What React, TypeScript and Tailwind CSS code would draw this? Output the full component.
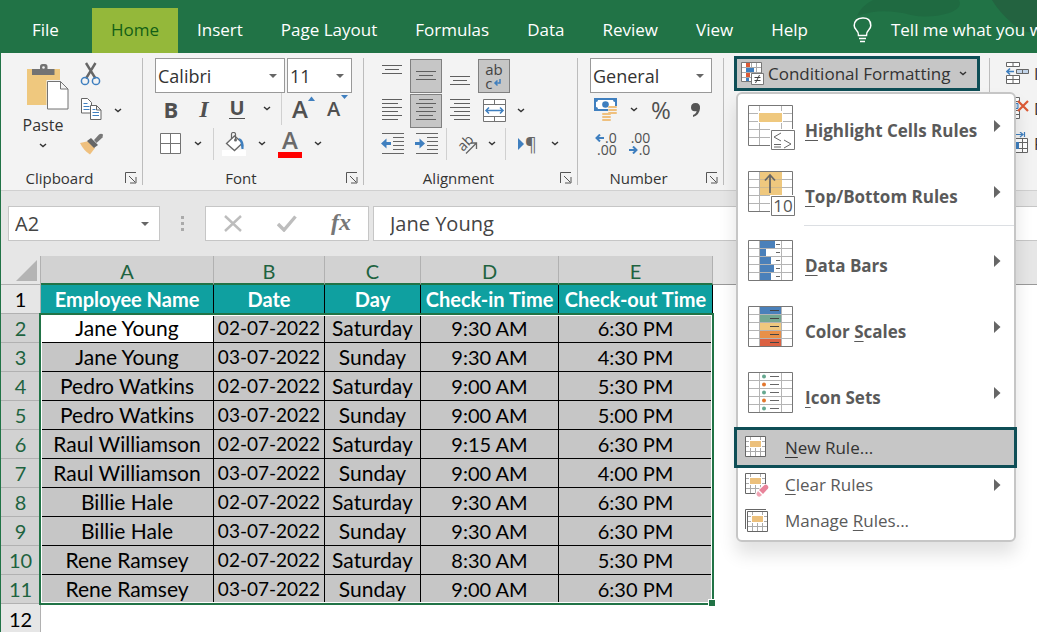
import React from 'react';
import clsx from 'clsx';

type Children = { children?: React.ReactNode };

const tabs = ['File', 'Home', 'Insert', 'Page Layout', 'Formulas', 'Data', 'Review', 'View', 'Help'];

const columns = ['A', 'B', 'C', 'D', 'E'];
const headings = ['Employee Name', 'Date', 'Day', 'Check-in Time', 'Check-out Time'];
const cellText = ['text-[21px]', 'text-[19px]', 'text-[21px]', 'text-xl', 'text-xl'];
const records = [
  ['Jane Young', '02-07-2022', 'Saturday', '9:30 AM', '6:30 PM'],
  ['Jane Young', '03-07-2022', 'Sunday', '9:30 AM', '4:30 PM'],
  ['Pedro Watkins', '02-07-2022', 'Saturday', '9:00 AM', '5:30 PM'],
  ['Pedro Watkins', '03-07-2022', 'Sunday', '9:00 AM', '5:00 PM'],
  ['Raul Williamson', '02-07-2022', 'Saturday', '9:15 AM', '6:30 PM'],
  ['Raul Williamson', '03-07-2022', 'Sunday', '9:00 AM', '4:00 PM'],
  ['Billie Hale', '02-07-2022', 'Saturday', '9:30 AM', '6:30 PM'],
  ['Billie Hale', '03-07-2022', 'Sunday', '9:30 AM', '6:30 PM'],
  ['Rene Ramsey', '02-07-2022', 'Saturday', '8:30 AM', '5:30 PM'],
  ['Rene Ramsey', '03-07-2022', 'Sunday', '9:00 AM', '6:30 PM'],
];

/* ---------- small drawing helpers ---------- */

const Icon = ({ w, h, children }: { w: number; h: number } & Children) => (
  <svg width={w} height={h} viewBox={`0 0 ${w} ${h}`} fill="none" className="shrink-0" aria-hidden="true">
    {children}
  </svg>
);

const Chevron = () => (
  <Icon w={8} h={5}>
    <path d="M1 1l3 2.6L7 1" stroke="#333" strokeWidth="1.4" />
  </Icon>
);

const DropButton = ({ label, className }: { label: string; className?: string }) => (
  <button type="button" aria-label={label} className={clsx('flex h-8 items-center justify-center', className)}>
    <Chevron />
  </button>
);

const Triangle = () => (
  <Icon w={8} h={4}>
    <path d="M0 0h8L4 4z" fill="#666" />
  </Icon>
);

const Divider = () => <div className="h-8 w-px shrink-0 bg-[#d0d0d0]" />;

// Horizontal strokes given as [x1, x2, y]
const Lines = ({ w, h, rows }: { w: number; h: number; rows: number[][] }) => (
  <Icon w={w} h={h}>
    <path d={rows.map(([a, b, y]) => `M${a} ${y + 0.5}H${b}`).join('')} stroke="#5f5f5f" />
  </Icon>
);

/* ---------- ribbon ---------- */

const Group = ({ title, className, children }: { title: string; className: string } & Children) => (
  <section aria-label={title} className={clsx('flex shrink-0', className)}>
    <div className="flex min-w-0 flex-1 flex-col">
      <div className="h-[108px]">{children}</div>
      <div className="flex h-6 items-center">
        <span className="flex-1 text-center text-[15px] leading-6 text-[#333]">{title}</span>
        <button type="button" aria-label={`${title} settings`} className="flex w-6 justify-center pl-0.5">
          <Icon w={12} h={12}>
            <path d="M.5 11V.5H11M4 4l6 6M11 5v6H5" stroke="#555" />
          </Icon>
        </button>
      </div>
    </div>
    <div className="h-[127px] w-px bg-[#bcbcbc]" />
  </section>
);

const Row = ({ className, children }: { className?: string } & Children) => (
  <div className={clsx('flex h-[35px] items-center', className)}>{children}</div>
);

const Cell = ({ label, pressed, children }: { label: string; pressed?: boolean } & Children) => (
  <div className="flex w-[34px] justify-center">
    <button
      type="button"
      aria-label={label}
      className={clsx(
        'flex h-[34px] w-8 items-center justify-center border',
        pressed ? 'border-[#808080] bg-[#c6c6c6]' : 'border-transparent',
      )}
    >
      {children}
    </button>
  </div>
);

const Combo = ({ label, value, className }: { label: string; value: string; className: string }) => (
  <div className={clsx('grid h-[35px] items-center border border-[#999] bg-white', className)}>
    <select
      aria-label={label}
      defaultValue={value}
      className="col-start-1 row-start-1 w-full appearance-none bg-transparent pl-0.5 text-lg leading-8 text-[#333]"
    >
      <option>{value}</option>
    </select>
    <span className="pointer-events-none col-start-1 row-start-1 mr-[7px] justify-self-end">
      <Triangle />
    </span>
  </div>
);

const Clipboard = () => (
  <Group title="Clipboard" className="w-[142px]">
    <div className="flex">
      <button type="button" className="flex w-[79px] flex-col items-center pt-1.5 pl-[5px] text-base leading-5 text-[#333]">
        <span className="ml-2.5">
          <Icon w={42} h={46}>
            <path d="M0 5h33v36H0z" fill="#efc87e" />
            <path d="M5 5h8V2.500q0-2.500 2.500-2.500h2.500q2.500 0 2.500 2.500V5h7v6H5z" fill="#737373" />
            <circle cx="16.500" cy="3.500" r="1.300" fill="#f3f3f3" />
            <path d="M19.500 16h15l8 8v22h-23z" fill="#f3f3f3" />
            <path d="M20.500 17.500h13l7.500 7.500v20h-20.500zM33.500 17.500V25H41" fill="#fff" stroke="#737373" />
          </Icon>
        </span>
        <span className="pt-[5px]">Paste</span>
        <span className="pt-2">
          <Chevron />
        </span>
      </button>
      <div className="flex flex-col">
        <Row>
          <button type="button" aria-label="Cut" className="pb-1">
            <Icon w={22} h={24}>
              <path d="M6 1l9.500 15.500M15.500 1L6 16.500" stroke="#666" strokeWidth="2.400" />
              <circle cx="5" cy="19" r="3.600" stroke="#3f7fbf" strokeWidth="1.500" />
              <circle cx="16" cy="19" r="3.600" stroke="#3f7fbf" strokeWidth="1.500" />
            </Icon>
          </button>
        </Row>
        <Row>
          <button type="button" aria-label="Copy" className="pb-1">
            <Icon w={22} h={24}>
              <path d="M1.500 1.500h6l4 4V16h-10z" fill="#fff" stroke="#666" />
              <path d="M3.500 6.500h4M3.500 9.500h6M3.500 12.500h6" stroke="#3f7fbf" />
              <path d="M10.500 8.500h6l4.500 4.500v9.500H10.500zM16.500 8.500V13H21" fill="#fff" stroke="#666" />
              <path d="M12.500 12.500h3M12.500 15.500h6.500M12.500 18.500h6.500" stroke="#3f7fbf" />
            </Icon>
          </button>
          <DropButton label="Copy options" className="ml-2 w-4" />
        </Row>
        <Row>
          <button type="button" aria-label="Format Painter" className="pb-1">
            <Icon w={24} h={22}>
              <path d="M0 10l9-2 6 7-5 6.500Q4 18 0 10z" fill="#efc07e" />
              <path d="M11 5l7 7-4 3-7-7z" fill="#666" />
              <path d="M14 7l5-5.500q2-1.500 4 0l-.5 3L16.500 10z" fill="#777" />
            </Icon>
          </button>
        </Row>
      </div>
    </div>
  </Group>
);

const FontGroup = () => (
  <Group title="Font" className="w-[221px]">
    <Row className="gap-0.5 pl-3">
      <Combo label="Font name" value="Calibri" className="w-[130px]" />
      <Combo label="Font size" value="11" className="w-[65px]" />
    </Row>
    <Row className="pb-1 pl-3 text-[22px] leading-8 text-[#505050]">
      <button type="button" aria-label="Bold" className="w-8 font-bold">B</button>
      <button type="button" aria-label="Italic" className="w-[34px] font-['Liberation_Serif',serif] text-2xl font-bold italic">I</button>
      <button type="button" aria-label="Underline" className="flex w-8 justify-center">
        <span className="border-b border-[#505050] text-xl leading-5 font-bold">U</span>
      </button>
      <DropButton label="Underline options" className="w-7" />
      <Divider />
      <button type="button" aria-label="Increase font size" className="ml-2.5 flex text-2xl font-semibold">
        A
        <Icon w={7} h={12}>
          <path d="M0 8L3.500 3.500 7 8z" fill="#3f7fbf" />
        </Icon>
      </button>
      <button type="button" aria-label="Decrease font size" className="ml-3 flex text-xl leading-9 font-semibold">
        A
        <Icon w={8} h={12}>
          <path d="M1 4h7L4.500 8z" fill="#3f7fbf" />
        </Icon>
      </button>
    </Row>
    <Row className="pb-1 pl-[17px]">
      <button type="button" aria-label="Borders">
        <Icon w={22} h={22}>
          <path d="M.5.5h20v20H.5zM10.500 0v21M0 10.500h21" fill="#fff" stroke="#737373" />
        </Icon>
      </button>
      <DropButton label="Border options" className="w-[31px]" />
      <Divider />
      <button type="button" aria-label="Fill color" className="ml-2">
        <Icon w={24} h={24}>
          <path d="M0 18h24v6H0z" fill="#fff" />
          <path d="M4.500 11.500L12.500 4l8 7-8 7.500z" fill="#fff" stroke="#666" strokeWidth="1.300" />
          <path d="M9.500 7V2q0-1.500 2-1.500t2 1.500v5" stroke="#666" strokeWidth="1.200" />
          <circle cx="13.500" cy="8" r="1.500" fill="#666" />
          <path d="M16.500 6q6 1 5 11h-2q0-6-3-11z" fill="#3f7fbf" />
        </Icon>
      </button>
      <DropButton label="Fill color options" className="w-8" />
      <button type="button" aria-label="Font color" className="flex h-7 w-6 flex-col items-center border-b-[6px] border-[#f00]">
        <span className="text-2xl leading-5 font-semibold text-[#6a6a6a]">A</span>
      </button>
      <DropButton label="Font color options" className="w-8" />
    </Row>
  </Group>
);

const Alignment = () => (
  <Group title="Alignment" className="w-[214px]">
    <Row className="pl-[11px]">
      <Cell label="Top align">
        <Lines w={20} h={22} rows={[[0, 20, 0], [3, 17, 4], [0, 20, 8]]} />
      </Cell>
      <Cell label="Middle align" pressed>
        <Lines w={20} h={22} rows={[[0, 20, 6], [3, 17, 10], [0, 20, 14]]} />
      </Cell>
      <Cell label="Bottom align">
        <Lines w={20} h={22} rows={[[0, 20, 11], [3, 17, 15], [0, 20, 19]]} />
      </Cell>
      <Cell label="Wrap text" pressed>
        <span className="flex flex-col text-[15px] leading-[14px] text-[#444]">
          <span>ab</span>
          <span className="flex items-center gap-px">
            c
            <Icon w={8} h={8}>
              <path d="M7 0v4H2M4.500 1.500L2 4l2.500 2.500" stroke="#3f7fbf" strokeWidth="1.500" />
            </Icon>
          </span>
        </span>
      </Cell>
    </Row>
    <Row className="pl-[11px]">
      <Cell label="Align left">
        <Lines w={20} h={23} rows={[[0, 20, 0], [0, 16, 4], [0, 20, 8], [0, 16, 12], [0, 20, 16], [0, 16, 20]]} />
      </Cell>
      <Cell label="Center" pressed>
        <Lines w={20} h={23} rows={[[3, 17, 0], [0, 20, 4], [3, 17, 8], [0, 20, 12], [3, 17, 16], [0, 20, 20]]} />
      </Cell>
      <Cell label="Align right">
        <Lines w={20} h={23} rows={[[0, 20, 0], [4, 20, 4], [0, 20, 8], [4, 20, 12], [0, 20, 16], [4, 20, 20]]} />
      </Cell>
      <Cell label="Merge and center">
        <Icon w={23} h={23}>
          <path d="M.5.5h22v22H.5zM.5 5.500h22M.5 17.500h22M11.500 0v5M11.500 18v5" fill="#fff" stroke="#737373" />
          <path d="M3 11.500h17M6 8.500l-3 3 3 3M17 8.500l3 3-3 3" stroke="#3f7fbf" strokeWidth="1.500" />
        </Icon>
      </Cell>
      <DropButton label="Merge options" className="w-5" />
    </Row>
    <Row className="pb-1 pl-[11px]">
      <Cell label="Decrease indent">
        <Icon w={23} h={21}>
          <path d="M1 .5h22M12 4.500h11M12 8.500h11M12 12.500h11M12 16.500h11M1 20.500h22" stroke="#666" />
          <path d="M0 10.500l5.500-5V9H10v3H5.500v3.500z" fill="#3f7fbf" />
        </Icon>
      </Cell>
      <Cell label="Increase indent">
        <Icon w={23} h={21}>
          <path d="M1 .5h22M12 4.500h11M12 8.500h11M12 12.500h11M12 16.500h11M1 20.500h22" stroke="#666" />
          <path d="M10 10.500l-5.500-5V9H0v3h4.500v3.500z" fill="#3f7fbf" />
        </Icon>
      </Cell>
      <span className="w-[3px]" />
      <Divider />
      <button type="button" aria-label="Orientation" className="ml-2">
        <Icon w={24} h={24}>
          <text x="8" y="20" transform="rotate(-45 8 20)" fontSize="14" fill="#555">ab</text>
          <path d="M11 21.500l10-10M15.500 11h6v6" stroke="#666" strokeWidth="1.300" />
        </Icon>
      </button>
      <DropButton label="Orientation options" className="w-[26px]" />
      <Divider />
      <button type="button" aria-label="Text direction" className="ml-3 flex items-center text-lg leading-8 text-[#666]">
        <Icon w={7} h={12}>
          <path d="M0 0l6 6-6 6z" fill="#3f7fbf" />
        </Icon>
        ¶
      </button>
      <DropButton label="Text direction options" className="w-9" />
    </Row>
  </Group>
);

const NumberGroup = () => (
  <Group title="Number" className="w-[146px]">
    <Row className="pl-3">
      <Combo label="Number format" value="General" className="w-[122px]" />
    </Row>
    <Row className="pb-0.5 pl-4">
      <button type="button" aria-label="Accounting format">
        <Icon w={24} h={23}>
          <path d="M0 0h23v13H0z" fill="#3f7fbf" />
          <path d="M2 4q2 0 2-2h15q0 2 2 2v5q-2 0-2 2H4q0-2-2-2z" fill="#fff" />
          <circle cx="11.500" cy="6.500" r="3.300" fill="#3f7fbf" />
          <path d="M14 8h9v9h-5v5H8v-7h6z" fill="#f3f3f3" />
          <g fill="#efc07e">
            <rect x="14" y="8" width="9" height="2" rx="1" />
            <rect x="14" y="11" width="9" height="2" rx="1" />
            <rect x="14" y="14" width="9" height="2" rx="1" />
            <rect x="8" y="15" width="9" height="2" rx="1" />
            <rect x="8" y="18" width="9" height="2" rx="1" />
            <rect x="8" y="21" width="9" height="2" rx="1" />
          </g>
        </Icon>
      </button>
      <DropButton label="Accounting options" className="w-[31px]" />
      <button type="button" aria-label="Percent style" className="w-6 text-2xl leading-8 text-[#505050]">%</button>
      <button type="button" aria-label="Comma style" className="ml-[18px]">
        <Icon w={10} h={14}>
          <path d="M4.500 0q5 0 4.500 5.500Q8.500 12 2 14v-2q3.500-1.500 3.500-4Q0 9 0 4.500 0 0 4.500 0z" fill="#555" />
        </Icon>
      </button>
    </Row>
    <Row className="gap-3 pb-1 pl-[17px] text-sm leading-3 text-[#505050]">
      <button type="button" aria-label="Increase decimal" className="flex flex-col items-end">
        <span className="flex items-center">
          <Icon w={10} h={8}>
            <path d="M9 4H2M5 .5L1.500 4 5 7.500" stroke="#3f7fbf" strokeWidth="2" />
          </Icon>
          .0
        </span>
        <span>.00</span>
      </button>
      <button type="button" aria-label="Decrease decimal" className="flex flex-col items-end">
        <span>.00</span>
        <span className="flex items-center">
          <Icon w={10} h={8}>
            <path d="M0 4h7M4 .5L7.500 4 4 7.500" stroke="#3f7fbf" strokeWidth="2" />
          </Icon>
          .0
        </span>
      </button>
    </Row>
  </Group>
);

/* ---------- conditional formatting menu ---------- */

const bigGrid = 'M0 8.500h45M0 16.500h45M0 24.500h45M0 32.500h45M11.500 0v41M33.500 0v41';

const BigIcon = ({ children }: Children) => (
  <Icon w={48} h={46}>
    <path d="M.5.5h44v40H.5z" fill="#fff" />
    <path d={bigGrid} stroke="#b4b4b4" />
    <path d="M.5.5h44v40H.5z" stroke="#777" />
    {children}
  </Icon>
);

const HighlightIcon = () => (
  <BigIcon>
    <path d="M10 6h25v12H10z" fill="#fff" />
    <path d="M11 8h23v9H11z" fill="#efc87e" />
    <path d="M22 24h26v22H22z" fill="#fff" />
    <path d="M23.500 25.500h23v19h-23z" fill="#fff" stroke="#777" />
    <path d="M33 28l-7 4 7 4M26 39.500h7M26 42h7M36 35l7 4-7 4" stroke="#666" />
  </BigIcon>
);

const TopBottomIcon = () => (
  <BigIcon>
    <path d="M12 1h22v23H12z" fill="#efc87e" />
    <path d="M12 8.500h22M12 16.500h22" stroke="#d0b98c" />
    <path d="M22 22V4M17 9.500L22 4l5 5.500" stroke="#666" strokeWidth="1.800" />
    <path d="M22 24h26v22H22z" fill="#fff" />
    <path d="M23.500 25.500h23v19h-23z" fill="#fff" stroke="#777" />
    <text x="35" y="41" textAnchor="middle" fontSize="17" fill="#555">10</text>
  </BigIcon>
);

const DataBarsIcon = () => (
  <BigIcon>
    <path d="M12 1h21v39H12z" fill="#fff" />
    <path d="M12 8.500h21M12 16.500h21M12 24.500h21M12 32.500h21" stroke="#b4b4b4" />
    {[15, 6, 11, 14, 11].map((w, i) => (
      <g key={i}>
        <path d={`M12 ${i * 8 + 1}h${w}v7h-${w}z`} fill="#4a80ba" />
        <path d={`M28 ${i * 8 + 4.5}h4`} stroke="#666" />
      </g>
    ))}
  </BigIcon>
);

const ColorScalesIcon = () => (
  <BigIcon>
    {['#4a80ba', '#74a892', '#efc87e', '#e89048', '#db6142'].map((fill, i) => (
      <g key={fill}>
        <path d={`M12 ${i * 8 + 1}h21v7H12z`} fill={fill} />
        <path d={`M22 ${i * 8 + 4.5}h9`} stroke="#444" />
      </g>
    ))}
  </BigIcon>
);

const IconSetsIcon = () => (
  <BigIcon>
    {['#65a88f', '#e3762c', '#65a88f', '#e3762c', '#65a88f'].map((fill, i) => (
      <g key={i}>
        <circle cx="16" cy={i * 8 + 4.5} r="2" fill={fill} />
        <path d={`M22 ${i * 8 + 4.5}h9`} stroke="#666" />
      </g>
    ))}
  </BigIcon>
);

const RuleSheet = () => (
  <>
    <path d="M.5.5h20v20H.5z" fill="#fff" />
    <path d="M0 5.500h21M0 10.500h21M0 15.500h21M5.500 0v21M10.500 11v10M15.500 0v21" stroke="#aaa" />
    <path d="M4 4h13v8H4z" fill="#fff" />
    <path d="M5 5h11v6H5z" fill="#ecc07c" />
    <path d="M.5.5h20v20H.5z" stroke="#666" />
  </>
);

const NewRuleIcon = () => (
  <Icon w={24} h={24}>
    <RuleSheet />
  </Icon>
);

const ClearRulesIcon = () => (
  <Icon w={24} h={24}>
    <RuleSheet />
    <path d="M9 22l9-11h6v13H9z" fill="#fff" />
    <path d="M14 17l5.500-5q1.500-1 3 .5t.5 3L18 21z" fill="#e8839a" />
    <path d="M13 18l4 4-2 1.500q-1.500.5-2.500-.5t-1-2.500z" fill="#f0a3b3" />
  </Icon>
);

const ManageRulesIcon = () => (
  <Icon w={24} h={24}>
    <path d="M.5 20V.5H21" stroke="#666" />
    <g transform="translate(2 2)">
      <RuleSheet />
    </g>
  </Icon>
);

const Arrow = () => (
  <Icon w={7} h={12}>
    <path d="M0 0l6.500 6L0 12z" fill="#666" />
  </Icon>
);

const U = ({ children }: Children) => (
  <span className="underline decoration-1 underline-offset-3">{children}</span>
);

const BigItem = ({ icon, children }: { icon: React.ReactNode } & Children) => (
  <button type="button" role="menuitem" className="flex h-[66px] w-full gap-[9px] pt-[11px] pr-[13px] pl-2.5 text-left">
    {icon}
    <span className="flex-1 pt-3.5 text-[17px] leading-6 font-bold whitespace-nowrap text-[#5a5a5a]">{children}</span>
    <span className="pt-[15px]">
      <Arrow />
    </span>
  </button>
);

const smallItem = 'flex items-center gap-4 pr-[13px] text-left text-[17px] leading-6';

const FormattingMenu = () => (
  <div
    role="menu"
    aria-label="Conditional Formatting"
    className="absolute top-full left-0.5 z-20 mt-px w-[280px] rounded-md border-2 border-[#c6c6c6] bg-white shadow-[0_12px_18px_rgba(0,0,0,0.12)]"
  >
    <BigItem icon={<HighlightIcon />}><U>H</U>ighlight Cells Rules</BigItem>
    <BigItem icon={<TopBottomIcon />}><U>T</U>op/Bottom Rules</BigItem>
    <div className="-mt-px mb-[3px] ml-[66px] h-px bg-[#dcdfe3]" />
    <BigItem icon={<DataBarsIcon />}><U>D</U>ata Bars</BigItem>
    <BigItem icon={<ColorScalesIcon />}>Color <U>S</U>cales</BigItem>
    <BigItem icon={<IconSetsIcon />}><U>I</U>con Sets</BigItem>
    <div className="-mr-[3px] -ml-1">
      <button
        type="button"
        role="menuitem"
        className={clsx(smallItem, 'h-[41px] w-full border-[3px] border-[#0e4e56] bg-[#c6c6c6] pl-2 text-[#333]')}
      >
        <NewRuleIcon />
        <span><U>N</U>ew Rule...</span>
      </button>
    </div>
    <button type="button" role="menuitem" className={clsx(smallItem, 'h-[34px] w-full pl-[7px] text-[#5a5a5a]')}>
      <ClearRulesIcon />
      <span className="flex-1"><U>C</U>lear Rules</span>
      <Arrow />
    </button>
    <button type="button" role="menuitem" className={clsx(smallItem, 'h-[38px] w-full pl-[7px] text-[#5a5a5a]')}>
      <ManageRulesIcon />
      <span>Manage <U>R</U>ules...</span>
    </button>
  </div>
);

const Styles = () => (
  <section aria-label="Styles" className="flex shrink-0">
    <div className="-mt-0.5 w-[265px] pl-2.5">
      <div className="relative w-[246px]">
        <button
          type="button"
          aria-haspopup="menu"
          aria-expanded="true"
          className="flex h-[35px] w-full items-center gap-1 border-[3px] border-[#0e4e56] bg-[#c6c6c6] pl-1 text-[17px] leading-6 whitespace-nowrap text-[#333]"
        >
          <Icon w={23} h={23}>
            <path d="M.5.5h20v19H.5z" fill="#fff" />
            <path d="M0 5.500h21M0 10.500h21M0 15.500h21M5.500 0v20M10.500 0v20M15.500 0v20" stroke="#aaa" />
            <path d="M5 1h4v4H5zM5 11h4v4H5z" fill="#dc5a36" />
            <path d="M5 6h8v4H5zM5 16h3v3H5z" fill="#3f7fbf" />
            <path d="M.5.5h20v19H.5z" stroke="#777" />
            <path d="M10.500 11.500h12v11h-12z" fill="#fff" stroke="#777" />
            <path d="M13.500 15.500h6M13.500 18.500h6M18.500 13l-4 8" stroke="#444" />
          </Icon>
          <span className="flex-1 text-left">Conditional Formatting</span>
          <span className="pr-2.5">
            <Chevron />
          </span>
        </button>
        <FormattingMenu />
      </div>
    </div>
    <div className="h-[127px] w-px bg-[#bcbcbc]" />
  </section>
);

const Cells = () => (
  <section aria-label="Cells" className="flex min-w-0 flex-1 flex-col overflow-hidden pl-4 text-base leading-8 text-[#333]">
    <Row className="gap-[5px] pb-1">
      <Icon w={23} h={23}>
        <path d="M.5.5h13v4H.5zM7 .5v4M.5 13.500h13v8H.5zM7 13.500v8M.5 17.500h13" fill="#fff" stroke="#666" />
        <path d="M10.500 7.500h12v4h-12zM16.500 7.500v4" fill="#c3d5ea" stroke="#666" />
        <path d="M8 9.500H1M4 6.500l-3 3 3 3" stroke="#3f7fbf" strokeWidth="1.600" />
      </Icon>
      <button type="button">Insert</button>
    </Row>
    <Row className="gap-[5px] pb-1">
      <Icon w={23} h={23}>
        <path d="M.5.5h13v4H.5zM7 .5v4M.5 13.500h13v8H.5zM7 13.500v8M.5 17.500h13" fill="#fff" stroke="#666" />
        <path d="M0 6.500h12v5H0z" fill="#c3d5ea" stroke="#3f7fbf" />
        <path d="M12 4l10 10M22 4L12 14" stroke="#dc5a36" strokeWidth="2.200" />
      </Icon>
      <button type="button">Delete</button>
    </Row>
    <Row className="gap-[5px] pb-1">
      <Icon w={23} h={24}>
        <path d="M7 2.500h10M14 0l3 2.500L14 5M18.500 0v5" stroke="#3f7fbf" strokeWidth="1.200" />
        <path d="M.5 6.500h21v14H.5zM.5 10.500h21M.5 16.500h21M16.500 7v13" fill="#fff" stroke="#666" />
        <path d="M5 10h8v7H5z" fill="#3f7fbf" />
      </Icon>
      <button type="button">Format</button>
    </Row>
  </section>
);

/* ---------- title tabs, formula bar, sheet ---------- */

const TabBar = () => (
  <header className="relative flex h-[53px] shrink-0 items-end overflow-hidden bg-[#217346] text-[17px] leading-6 whitespace-nowrap text-white">
    <svg width="190" height="34" viewBox="0 0 190 34" className="absolute top-0 right-0" aria-hidden="true">
      <path d="M10 16Q14 6 26 0h86q4 8-10 13-20 6-38 2-30-8-54 1z" fill="#1f6a41" />
      <path d="M145 0h45v32q-14 2-24-8-14-12-21-24z" fill="#236340" />
    </svg>
    <nav className="relative flex h-[45px] pl-3" aria-label="Ribbon tabs">
      {tabs.map((tab) => (
        <button
          key={tab}
          type="button"
          className={clsx(
            'flex items-center px-[19px] pb-0.5',
            tab === 'File' && 'mr-3.5',
            tab === 'Home' && 'bg-[#94b83a] text-[#135f16]',
          )}
        >
          {tab}
        </button>
      ))}
    </nav>
    <button type="button" className="relative ml-[26px] flex h-[45px] items-center gap-[19px] pb-0.5">
      <Icon w={19} h={26}>
        <path
          d="M5.500 18.500Q5.500 15 3 12.500 1.200 10.500 1.200 8.500 1.500 1.500 9.500 1t8.300 7.500q0 2-1.800 4-2.500 2.500-2.500 6zM6 21.500h7M7 24.500h5"
          stroke="#fff"
          strokeWidth="1.500"
        />
      </Icon>
      Tell me what you want to do
    </button>
  </header>
);

const FormulaBar = () => (
  <div className="flex items-center bg-[#e6e6e6] py-[15px] pl-[7px]">
    <div className="flex h-[35px] w-[152px] items-center border border-[#c6c6c6] bg-white pr-2.5 pl-1.5">
      <input
        aria-label="Name box"
        defaultValue="A2"
        className="min-w-0 flex-1 bg-transparent text-xl leading-8 text-[#444]"
      />
      <Triangle />
    </div>
    <div className="flex w-[45px] justify-center">
      <Icon w={3} h={16}>
        <path d="M0 0h3v3H0zM0 6h3v3H0zM0 12h3v3H0z" fill="#aaa" />
      </Icon>
    </div>
    <div className="flex h-[35px] w-[164px] items-center justify-between border border-[#c6c6c6] bg-white pr-[17px] pl-[18px]">
      <button type="button" aria-label="Cancel">
        <Icon w={18} h={17}>
          <path d="M1 1l16 15M17 1L1 16" stroke="#bdbdbd" strokeWidth="2.400" />
        </Icon>
      </button>
      <button type="button" aria-label="Enter">
        <Icon w={20} h={17}>
          <path d="M1 9l6 6L18.500 1.500" stroke="#bdbdbd" strokeWidth="3.400" />
        </Icon>
      </button>
      <button type="button" aria-label="Insert function" className="pb-1 font-['Liberation_Serif',serif] text-2xl leading-7 font-bold text-[#777] italic">
        fx
      </button>
    </div>
    <input
      aria-label="Formula bar"
      defaultValue="Jane Young"
      className="ml-1 h-[35px] min-w-0 flex-1 border border-r-0 border-[#c6c6c6] bg-white pl-4 text-xl leading-8 text-[#444]"
    />
  </div>
);

const Sheet = () => (
  <div className="relative font-['Lato',sans-serif]">
    <table className="w-full table-fixed border-separate border-spacing-0 text-center text-xl leading-6">
      <colgroup>
        <col className="w-10" />
        <col className="w-[173px]" />
        <col className="w-[111px]" />
        <col className="w-[96px]" />
        <col className="w-[138px]" />
        <col className="w-[154px]" />
        <col />
      </colgroup>
      <thead>
        <tr className="h-[29px] bg-[#e6e6e6]">
          <td className="border-r border-b border-[#b1b1b1] p-0">
            <div className="flex justify-end pr-[3px]">
              <Icon w={21} h={21}>
                <path d="M21 0v21H0z" fill="#b4b4b4" />
              </Icon>
            </div>
          </td>
          {columns.map((col) => (
            <th
              key={col}
              scope="col"
              className="border-r border-b-2 border-r-[#b1b1b1] border-b-[#217346] bg-[#d2d2d2] p-0 pt-[3px] font-normal text-[#1e6340]"
            >
              {col}
            </th>
          ))}
          <td className="border-b border-[#999] p-0" />
        </tr>
      </thead>
      <tbody>
        <tr className="h-[29px]">
          <th scope="row" className="border-r border-b border-[#b1b1b1] bg-[#e6e6e6] p-0 font-normal">1</th>
          {headings.map((text) => (
            <th key={text} className="border-r border-b border-black bg-[#0fa0a0] p-0 font-bold whitespace-nowrap text-white">
              {text}
            </th>
          ))}
        </tr>
        {records.map((record, r) => (
          <tr key={r} className="h-[29px]">
            <th scope="row" className="border-r border-b border-[#b1b1b1] bg-[#d2d2d2] p-0 font-normal text-[#1e6340]">
              {r + 2}
            </th>
            {record.map((text, c) => (
              <td
                key={c}
                className={clsx(
                  'border-r border-b border-black p-0 leading-6 whitespace-nowrap',
                  cellText[c],
                  r === 0 && c === 0 ? 'bg-white' : 'bg-[#c6c6c6]',
                )}
              >
                {text}
              </td>
            ))}
          </tr>
        ))}
        <tr className="h-[29px]">
          <th scope="row" className="border-r border-[#b1b1b1] bg-[#e6e6e6] p-0 font-normal">12</th>
        </tr>
      </tbody>
    </table>
    {/* selection frame round A2:E11 */}
    <div className="pointer-events-none absolute top-[57px] left-[38px] h-[292px] w-[675px] border-2 border-[#217346]">
      <div className="h-full border border-white" />
      <div className="absolute -right-[3px] -bottom-[3px] size-[7px] border-t border-l border-white bg-[#217346]" />
    </div>
  </div>
);

const App: React.FC = () => (
  <div className="h-screen overflow-hidden border-l border-[#217346] bg-white font-['Open_Sans',sans-serif]">
    <TabBar />
    <div className="flex border-b border-[#d0d0d0] bg-[#f3f3f3] pt-[5px]">
      <Clipboard />
      <FontGroup />
      <Alignment />
      <NumberGroup />
      <Styles />
      <Cells />
    </div>
    <FormulaBar />
    <Sheet />
  </div>
);

export default App;
